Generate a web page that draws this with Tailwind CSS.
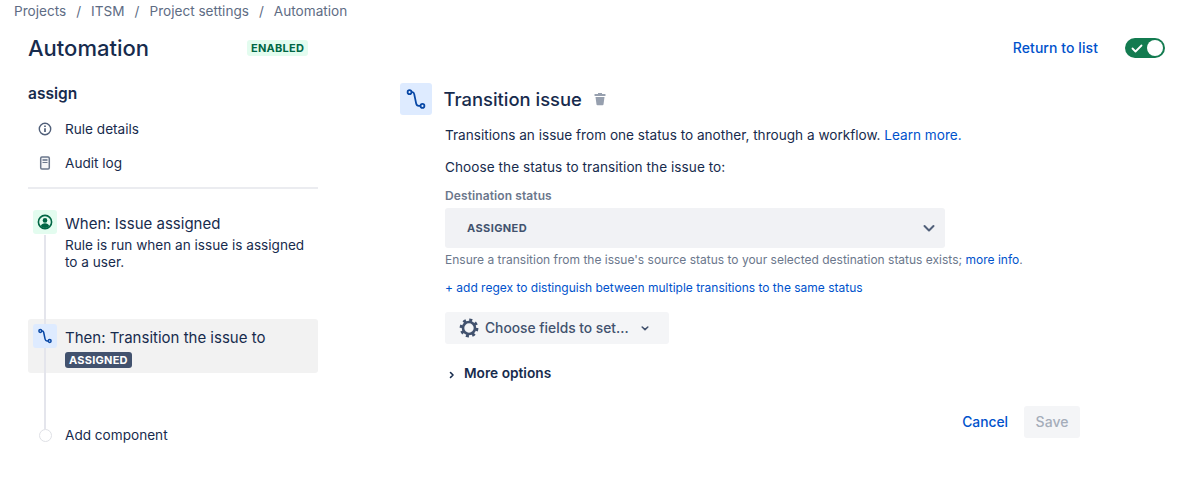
<!DOCTYPE html>
<html lang="en">
<head>
  <meta charset="UTF-8">
  <title>Automation</title>
  <script src="https://cdn.jsdelivr.net/npm/@tailwindcss/browser@4"></script>
</head>
<body class="bg-white text-[#172B4D] font-['Inter',sans-serif] text-[13.6px]">
  <div class="h-[501px] w-[1180px] overflow-hidden">
    <nav class="flex h-[22px] items-center pl-[14px] text-[#5E6C84] text-[13.6px]">
      <span>Projects</span><span class="px-[10px]">/</span>
      <span>ITSM</span><span class="px-[10px]">/</span>
      <span>Project settings</span><span class="px-[10px]">/</span>
      <span>Automation</span>
    </nav>

    <header class="mt-[16px] flex h-[20px] items-center pl-[28px] pr-[15px]">
      <h1 class="w-[219px] text-[22px] font-medium">Automation</h1>
      <span class="rounded-[3px] bg-[#E3FCEF] px-[4px] text-[11px] leading-[16px] font-bold tracking-[0.25px] text-[#006644]">ENABLED</span>
      <a class="mb-[1px] ml-auto text-sm font-medium tracking-[0.07px] text-[#0052CC]">Return to list</a>
      <div class="relative ml-[27px] h-[20px] w-[40px] rounded-full bg-[#137B50]">
        <svg class="absolute left-[5px] top-[3px]" width="14" height="14" viewBox="0 0 14 14" fill="none" stroke="white" stroke-width="1.800" stroke-linecap="round" stroke-linejoin="round"><path d="M2.500 7.500l3 3 6-6"/></svg>
        <span class="absolute right-[2px] top-[2px] h-[16px] w-[16px] rounded-full bg-white"></span>
      </div>
    </header>

    <div class="flex">
      <aside class="relative ml-[28px] w-[290px] shrink-0">
        <h2 class="mt-[26px] text-[15.5px] leading-[20px] font-semibold">assign</h2>
        <ul class="mt-[8px]">
          <li class="flex h-[34px] items-center">
            <svg class="ml-[10px] mr-[13px]" width="14" height="14" viewBox="0 0 14 14" fill="none" stroke="#505F79"><circle cx="7" cy="7" r="5.700" stroke-width="1.400"/><path d="M7 6.300v3.700" stroke-width="1.700"/><path d="M7 3.600v1.500" stroke-width="1.700"/></svg>
            Rule details
          </li>
          <li class="flex h-[34px] items-center">
            <svg class="ml-[10px] mr-[13px]" width="14" height="14" viewBox="0 0 14 14" fill="none"><rect x="2.700" y="1" width="8.600" height="12" rx="1.200" fill="#F4F5F7" stroke="#6B778C" stroke-width="1.500"/><path d="M4.500 4h5" stroke="#6B778C" stroke-width="1.600"/><path d="M4.500 6.500h5" stroke="#6B778C" stroke-width="1"/></svg>
            Audit log
          </li>
        </ul>
        <hr class="mt-[7px] border-0 border-t-2 border-[#EBECF0]">

        <span class="absolute left-[16px] top-[177px] h-[194px] w-[2px] bg-[#E4E5EC]"></span>

        <div class="relative mt-[21px] flex h-[109px] gap-[8px] pl-[5px]">
          <span class="flex h-[24px] w-[24px] shrink-0 items-center justify-center rounded-[3px] bg-[#E3FCEF]">
            <svg width="16" height="16" viewBox="0 0 16 16"><circle cx="8" cy="8" r="6.600" fill="none" stroke="#006644" stroke-width="1.600"/><circle cx="8" cy="6.400" r="2.300" fill="#006644"/><path d="M3.800 12c.6-2 2.200-2.800 4.200-2.800s3.600.8 4.200 2.800c-1 1.300-2.500 2-4.200 2s-3.200-.7-4.200-2z" fill="#006644"/></svg>
          </span>
          <div class="pt-[4px]">
            <p class="text-[15px] leading-[20px]">When: Issue assigned</p>
            <p class="mt-[3px] leading-[17px]">Rule is run when an issue is assigned<br>to a user.</p>
          </div>
        </div>

        <div class="relative flex h-[54px] gap-[8px] rounded-[3px] bg-[#F2F2F2] pl-[5px] pt-[5px]">
          <span class="absolute left-[16px] top-0 h-[54px] w-[2px] bg-[#E4E5EC]"></span>
          <span class="relative flex h-[24px] w-[24px] shrink-0 items-center justify-center rounded-[3px] bg-[#DEEBFF]">
            <svg width="16" height="16" viewBox="0 0 16 16" fill="none" stroke="#0747A6" stroke-width="1.500"><circle cx="3.300" cy="3" r="1.400"/><circle cx="12.700" cy="13" r="1.400"/><path d="M4.700 3H5.400Q6.400 3 6.700 4.500L8.100 11.200Q8.500 13 10 13H11.300"/></svg>
          </span>
          <div class="pt-[4px]">
            <p class="text-[15px] leading-[20px]">Then: Transition the issue to</p>
            <span class="mt-[4px] block w-fit rounded-[3px] bg-[#42526E] px-[4px] text-[11px] leading-[16px] font-bold tracking-[0.25px] text-white">ASSIGNED</span>
          </div>
        </div>

        <div class="relative mt-[52px] flex h-[20px] items-center">
          <span class="ml-[11px] h-[13px] w-[13px] rounded-full border border-[#DFE1E6] bg-white"></span>
          <span class="ml-[13px]">Add component</span>
        </div>
      </aside>

      <main class="ml-[82px] flex-1 pt-[25px]">
        <div class="flex items-center">
          <span class="flex h-[32px] w-[32px] items-center justify-center rounded-[3px] bg-[#DEEBFF]">
            <svg width="22" height="22" viewBox="0 0 16 16" fill="none" stroke="#0747A6" stroke-width="1.300"><circle cx="3.300" cy="3" r="1.400"/><circle cx="12.700" cy="13" r="1.400"/><path d="M4.700 3H5.400Q6.400 3 6.700 4.500L8.100 11.200Q8.500 13 10 13H11.300"/></svg>
          </span>
          <h2 class="ml-[11.500px] mt-[2px] text-[18.4px] font-medium">Transition issue</h2>
          <svg class="ml-[11px]" width="14" height="14" viewBox="0 0 14 14" fill="#97A0AF"><rect x="1.500" y="2" width="11" height="2" rx=".5"/><path d="M2.500 5h9l-1 7.500a1 1 0 0 1-1 .8h-5a1 1 0 0 1-1-.8z"/><rect x="5" y="1" width="4" height="1.500"/></svg>
        </div>

        <div class="ml-[45px]">
          <p class="mt-[10px] leading-[20px]">Transitions an issue from one status to another, through a workflow. <a class="text-[#0052CC]">Learn more.</a></p>
          <p class="mt-[12px] leading-[20px] tracking-[0.05px]">Choose the status to transition the issue to:</p>
          <label class="mt-[11px] block text-xs leading-[16px] font-semibold tracking-[0.1px] text-[#6B778C]">Destination status</label>
          <div class="mt-[4px] flex h-[40px] w-[500px] items-center justify-between rounded-[3px] bg-[#F1F2F5] pl-[22px] pr-[8px]">
            <span class="mt-[1px] text-[11px] font-bold tracking-[0.4px] text-[#42526E]">ASSIGNED</span>
            <svg width="16" height="16" viewBox="0 0 16 16" fill="none" stroke="#505F79" stroke-width="2" stroke-linecap="round" stroke-linejoin="round"><path d="M3.500 6l4.500 4.500 4.500-4.500"/></svg>
          </div>
          <p class="mt-[4px] text-xs leading-[16px] text-[#6B778C]">Ensure a transition from the issue's source status to your selected destination status exists; <a class="text-[#0052CC]">more info</a>.</p>
          <a class="mt-[12px] block text-xs leading-[16px] text-[#0052CC]">+ add regex to distinguish between multiple transitions to the same status</a>

          <button class="mt-[16px] flex h-[32px] w-[224px] items-center rounded-[3px] bg-[#F4F5F7] pl-[14px] text-[13.8px] font-medium text-[#42526E]">
            <svg width="20" height="20" viewBox="0 0 20 20" fill="none" stroke="#42526E"><circle cx="10" cy="10" r="6" stroke-width="2.600"/><circle cx="10" cy="10" r="8" stroke-width="2.800" stroke-dasharray="3 3.280"/></svg>
            <span class="ml-[6px]">Choose fields to set...</span>
            <svg class="ml-[10px]" width="12" height="12" viewBox="0 0 12 12" fill="none" stroke="#42526E" stroke-width="1.600" stroke-linecap="round" stroke-linejoin="round"><path d="M3.200 5l2.800 2.600L8.800 5"/></svg>
          </button>

          <div class="mt-[19px] flex h-[20px] items-center text-[13.7px] font-semibold">
            <svg class="ml-[2px] mr-[7px] mt-[3px]" width="10" height="10" viewBox="0 0 10 10" fill="none" stroke="#172B4D" stroke-width="1.600" stroke-linecap="round" stroke-linejoin="round"><path d="M3.500 2.500L6 5 3.500 7.500"/></svg>
            More options
          </div>

          <div class="mt-[23px] flex items-center justify-end w-[635px]">
            <a class="text-[13.8px] font-medium text-[#0052CC]">Cancel</a>
            <button class="ml-[16px] h-[32px] w-[56px] rounded-[3px] bg-[#F4F5F7] text-sm font-medium text-[#A5ADBA]">Save</button>
          </div>
        </div>
      </main>
    </div>
  </div>
</body>
</html>
